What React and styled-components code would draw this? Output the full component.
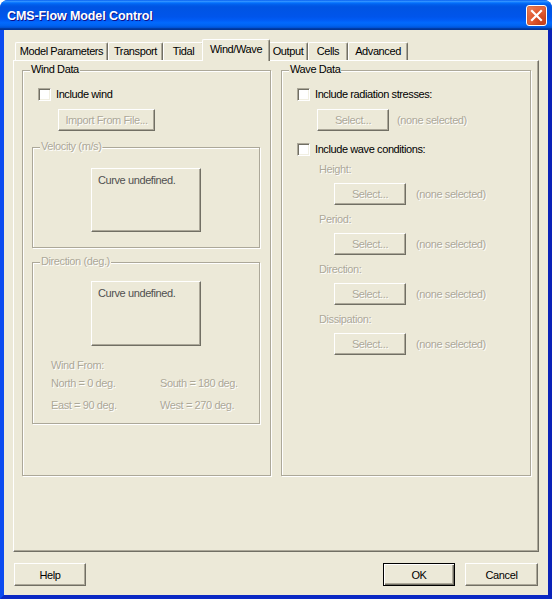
import React from "react"
import styled, { createGlobalStyle } from "styled-components"

const GlobalStyle = createGlobalStyle`
  html, body {
    margin: 0;
    padding: 0;
    background: #fff;
  }
  body {
    font-family: "Liberation Sans", Arial, sans-serif;
    font-size: 11px;
    letter-spacing: -0.4px;
    color: #000;
  }
`

const face = "#ECE9D8"
const shadow = "#ACA899"
const darkShadow = "#716F64"

const tabs = [
  { name: "Model Parameters", width: 93 },
  { name: "Transport", width: 55 },
  { name: "Tidal", width: 41 },
  { name: "Wind/Wave", width: 68 },
  { name: "Output", width: 40 },
  { name: "Cells", width: 40 },
  { name: "Advanced", width: 60 }
]

const waveInputs = ["Height:", "Period:", "Direction:", "Dissipation:"]

const App = () => (
  <>
    <GlobalStyle />
    <Window>
      <TitleBar>
        <Title>CMS-Flow Model Control</Title>
        <CloseButton>
          <svg width="13" height="13" viewBox="0 0 13 13">
            <path d="M2 2 L11 11 M11 2 L2 11" stroke="#fff" strokeWidth="2.2" strokeLinecap="square" />
          </svg>
        </CloseButton>
      </TitleBar>
      <Body>
        <TabRow>
          {tabs.map(t => (
            <Tab key={t.name} width={t.width} active={t.name === "Wind/Wave"}>
              {t.name}
            </Tab>
          ))}
        </TabRow>
        <Panel>
          <Group width={249}>
            <GroupLabel>Wind Data</GroupLabel>
            <CheckRow top={17} left={15}>
              <CheckBox />
              <span>Include wind</span>
            </CheckRow>
            <Button disabled width={97} top={8} left={35}>
              Import From File...
            </Button>
            <SubGroup top={16} height={101}>
              <GroupLabel disabled>Velocity (m/s)</GroupLabel>
              <CurveBox top={20} height={64}>Curve undefined.</CurveBox>
            </SubGroup>
            <SubGroup top={14} height={162}>
              <GroupLabel disabled>Direction (deg.)</GroupLabel>
              <CurveBox top={18} height={65}>Curve undefined.</CurveBox>
              <WindFrom>
                <Dim>Wind From:</Dim>
                <Compass>
                  <Dim>North = 0 deg.</Dim>
                  <Dim>South = 180 deg.</Dim>
                  <Dim>East = 90 deg.</Dim>
                  <Dim>West = 270 deg.</Dim>
                </Compass>
              </WindFrom>
            </SubGroup>
          </Group>
          <Group width={250}>
            <GroupLabel>Wave Data</GroupLabel>
            <CheckRow top={17} left={15}>
              <CheckBox />
              <span>Include radiation stresses:</span>
            </CheckRow>
            <SelectRow top={8} left={35} gap={8}>
              <Button disabled width={72}>Select...</Button>
              <Dim>(none selected)</Dim>
            </SelectRow>
            <CheckRow top={12} left={15}>
              <CheckBox />
              <span>Include wave conditions:</span>
            </CheckRow>
            {waveInputs.map((label, i) => (
              <React.Fragment key={label}>
                <FieldLabel top={i === 0 ? 7 : 8}>{label}</FieldLabel>
                <SelectRow top={7} left={52} gap={10}>
                  <Button disabled width={72}>Select...</Button>
                  <Dim>(none selected)</Dim>
                </SelectRow>
              </React.Fragment>
            ))}
          </Group>
        </Panel>
        <Footer>
          <Button width={72} height={23}>Help</Button>
          <FooterRight>
            <Button width={72} height={23} primary>OK</Button>
            <Button width={73} height={23}>Cancel</Button>
          </FooterRight>
        </Footer>
      </Body>
    </Window>
  </>
)

const Window = styled.div`
  width: 552px;
  height: 599px;
  display: flex;
  flex-direction: column;
  border-radius: 8px 8px 0 0;
  overflow: hidden;
  background: #0054e3;
`

const TitleBar = styled.div`
  height: 30px;
  flex: none;
  display: flex;
  align-items: center;
  justify-content: space-between;
  padding: 0 5px 0 7px;
  background: linear-gradient(
    to bottom,
    #0058ee 0%,
    #3593ff 4%,
    #288eff 6%,
    #127dff 8%,
    #036ffc 10%,
    #0262ee 14%,
    #0057e5 20%,
    #0054e3 24%,
    #0055eb 56%,
    #005bf5 66%,
    #026afe 76%,
    #0062ef 86%,
    #0052d6 92%,
    #0040ab 94%,
    #003092 100%
  );
`

const Title = styled.div`
  color: #fff;
  font-family: "Liberation Sans", Arial, sans-serif;
  font-weight: bold;
  font-size: 12.5px;
  letter-spacing: -0.1px;
  text-shadow: 1px 1px 0 #0f1089;
  padding-top: 1px;
`

const CloseButton = styled.div`
  width: 19px;
  height: 19px;
  display: flex;
  align-items: center;
  justify-content: center;
  border: 1px solid #fff;
  border-radius: 3px;
  background: radial-gradient(circle at 75% 80%, #c63e1a 0%, #e05a30 45%, #f08860 100%);
  box-shadow: inset 0 0 2px rgba(120, 30, 0, 0.6);
`

const Body = styled.div`
  flex: 1;
  display: flex;
  flex-direction: column;
  background: ${face};
  border-left: 4px solid #0b4bf0;
  border-right: 4px solid #0a22b8;
  border-bottom: 4px solid #0a28c4;
  padding: 9px 9px 9px 9px;
`

const TabRow = styled.div`
  height: 21px;
  display: flex;
  align-items: flex-end;
  padding-left: 2px;
  position: relative;
  z-index: 1;
`

const Tab = styled.div`
  width: ${p => p.width}px;
  height: ${p => (p.active ? 22 : 18)}px;
  margin: ${p => (p.active ? "0 -2px -1px" : "0")};
  position: relative;
  z-index: ${p => (p.active ? 2 : 1)};
  box-sizing: border-box;
  background: ${face};
  border-top: 1px solid #fff;
  border-left: 1px solid #fff;
  border-right: 1px solid ${darkShadow};
  border-radius: 2px 2px 0 0;
  box-shadow: inset -1px 0 0 ${shadow};
  display: flex;
  justify-content: center;
  padding-top: ${p => (p.active ? 3 : 2)}px;
  line-height: 13px;
  white-space: nowrap;
`

const Panel = styled.div`
  height: 492px;
  box-sizing: border-box;
  display: flex;
  gap: 10px;
  padding: 9px 0 0 8px;
  border-top: 1px solid #fff;
  border-left: 1px solid #fff;
  border-right: 1px solid ${darkShadow};
  border-bottom: 1px solid ${darkShadow};
  box-shadow: inset -1px -1px 0 ${shadow};
`

const Group = styled.div`
  position: relative;
  width: ${p => p.width}px;
  height: 406px;
  box-sizing: border-box;
  display: flex;
  flex-direction: column;
  align-items: flex-start;
  border: 1px solid ${shadow};
  box-shadow: inset 1px 1px 0 #fff, 1px 1px 0 #fff;
`

const SubGroup = styled.div`
  position: relative;
  width: 228px;
  height: ${p => p.height}px;
  margin: ${p => p.top}px 0 0 9px;
  box-sizing: border-box;
  display: flex;
  flex-direction: column;
  align-items: flex-start;
  border: 1px solid ${shadow};
  box-shadow: inset 1px 1px 0 #fff, 1px 1px 0 #fff;
`

const GroupLabel = styled.div`
  position: absolute;
  top: -8px;
  left: 7px;
  padding: 0 1px;
  line-height: 13px;
  background: ${face};
  color: ${p => (p.disabled ? shadow : "#000")};
  text-shadow: ${p => (p.disabled ? "1px 1px 0 #fff" : "none")};
`

const CheckRow = styled.div`
  display: flex;
  align-items: center;
  gap: 5px;
  height: 13px;
  line-height: 13px;
  margin: ${p => p.top}px 0 0 ${p => p.left}px;
  white-space: nowrap;
`

const CheckBox = styled.div`
  width: 13px;
  height: 13px;
  box-sizing: border-box;
  background: #fff;
  border-top: 1px solid ${shadow};
  border-left: 1px solid ${shadow};
  border-right: 1px solid #fff;
  border-bottom: 1px solid #fff;
  box-shadow: inset 1px 1px 0 ${darkShadow}, inset -1px -1px 0 #f1efe2;
`

const Button = styled.div`
  width: ${p => p.width}px;
  height: ${p => p.height || 22}px;
  margin: ${p => p.top || 0}px 0 0 ${p => p.left || 0}px;
  box-sizing: border-box;
  flex: none;
  display: flex;
  align-items: center;
  justify-content: center;
  background: ${face};
  color: ${p => (p.disabled ? shadow : "#000")};
  text-shadow: ${p => (p.disabled ? "1px 1px 0 #fff" : "none")};
  border-top: 1px solid ${p => (p.primary ? "#000" : "#fff")};
  border-left: 1px solid ${p => (p.primary ? "#000" : "#fff")};
  border-right: 1px solid ${p => (p.primary ? "#000" : darkShadow)};
  border-bottom: 1px solid ${p => (p.primary ? "#000" : darkShadow)};
  box-shadow: ${p =>
    p.primary
      ? `inset 1px 1px 0 #fff, inset -1px -1px 0 ${darkShadow}, inset -2px -2px 0 ${shadow}`
      : `inset -1px -1px 0 ${shadow}`};
  white-space: nowrap;
`

const CurveBox = styled.div`
  width: 110px;
  height: ${p => p.height}px;
  margin: ${p => p.top}px 0 0 58px;
  box-sizing: border-box;
  padding: 5px 0 0 6px;
  line-height: 13px;
  color: #505050;
  background: ${face};
  border-top: 1px solid #fff;
  border-left: 1px solid #fff;
  border-right: 1px solid ${darkShadow};
  border-bottom: 1px solid ${darkShadow};
  box-shadow: inset -1px -1px 0 ${shadow};
`

const Dim = styled.span`
  color: ${shadow};
  text-shadow: 1px 1px 0 #fff;
  line-height: 13px;
  white-space: nowrap;
`

const WindFrom = styled.div`
  display: flex;
  flex-direction: column;
  gap: 5px;
  margin: 13px 0 0 18px;
`

const Compass = styled.div`
  display: grid;
  grid-template-columns: 109px auto;
  row-gap: 9px;
`

const SelectRow = styled.div`
  display: flex;
  align-items: center;
  gap: ${p => p.gap}px;
  margin: ${p => p.top}px 0 0 ${p => p.left}px;
`

const FieldLabel = styled(Dim)`
  display: block;
  margin: ${p => p.top}px 0 0 37px;
`

const Footer = styled.div`
  display: flex;
  justify-content: space-between;
  margin-top: 11px;
  padding: 0 1px;
`

const FooterRight = styled.div`
  display: flex;
  gap: 10px;
`

export default App
